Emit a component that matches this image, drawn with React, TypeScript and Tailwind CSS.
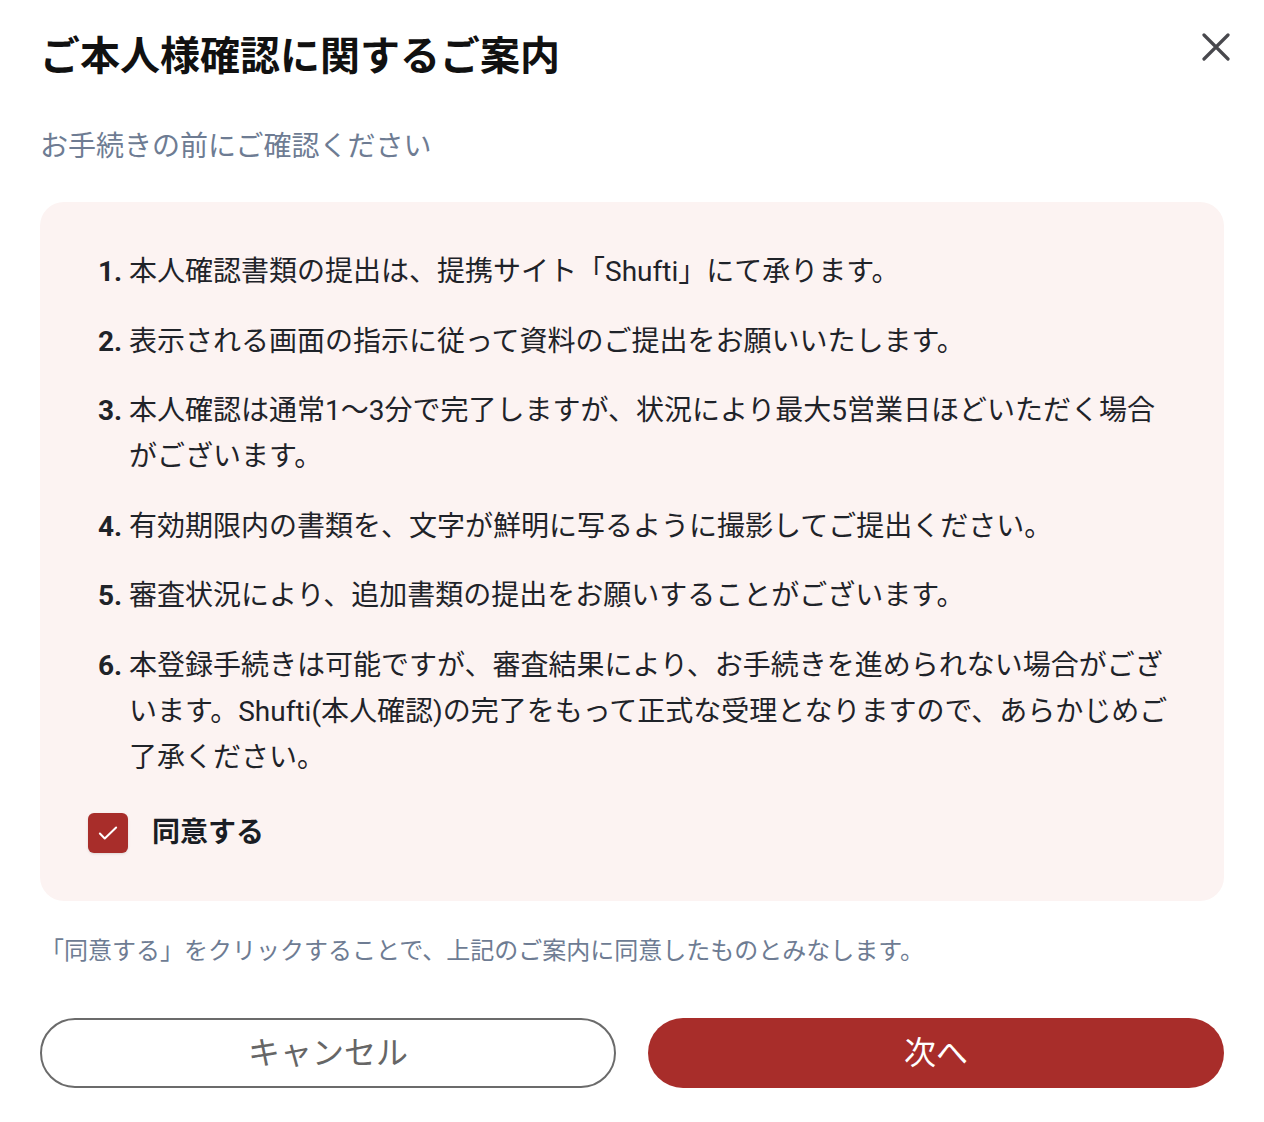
const items = [
    '本人確認書類の提出は、提携サイト「Shufti」にて承ります。',
    '表示される画面の指示に従って資料のご提出をお願いいたします。',
    '本人確認は通常1〜3分で完了しますが、状況により最大5営業日ほどいただく場合がございます。',
    '有効期限内の書類を、文字が鮮明に写るように撮影してご提出ください。',
    '審査状況により、追加書類の提出をお願いすることがございます。',
    '本登録手続きは可能ですが、審査結果により、お手続きを進められない場合がございます。Shufti(本人確認)の完了をもって正式な受理となりますので、あらかじめご了承ください。',
];

export default function App() {
    return (
        <div
            className="min-h-screen bg-white px-10 pt-[29px]"
            style={{ fontFamily: 'Roboto, "Noto Sans CJK JP", sans-serif' }}
        >
            {/* Header */}
            <div className="flex items-start justify-between">
                <h1 className="text-[40px] leading-[56px] font-bold text-[#111]">
                    ご本人様確認に関するご案内
                </h1>
                <button className="mt-[4px] mr-[-6px] text-[#48484d]">
                    <svg width="28" height="28" viewBox="0 0 28 28" fill="none" stroke="currentColor" strokeWidth="3.2" strokeLinecap="round">
                        <path d="M2 2l24 24M26 2L2 26" />
                    </svg>
                </button>
            </div>

            <p className="mt-[42px] text-[28px] leading-[40px] text-[#6e7c93]">
                お手続きの前にご確認ください
            </p>

            {/* Notice box */}
            <div className="mt-[35px] rounded-3xl bg-[#fcf3f2] pl-12 pr-[52px] pt-[47px] pb-[48px]">
                <ol className="flex flex-col gap-[23.5px] pl-[10px]">
                    {items.map((text, i) => (
                        <li key={i} className="flex text-[28px] leading-[46px] text-[#1f2329]">
                            <span className="w-[31px] shrink-0 font-bold">{i + 1}.</span>
                            <span>{text}</span>
                        </li>
                    ))}
                </ol>

                <label className="mt-[32.5px] flex items-center gap-6">
                    <span className="flex h-10 w-10 items-center justify-center rounded-md bg-[#a82d2a] shadow-sm">
                        <svg width="26" height="26" viewBox="0 0 24 24" fill="none" stroke="white" strokeWidth="1.9" strokeLinecap="round" strokeLinejoin="round">
                            <path d="M4.5 12.5l4.5 4.5L19.5 7" />
                        </svg>
                    </span>
                    <span className="text-[28px] leading-[40px] font-bold text-[#1a1d24]">同意する</span>
                </label>
            </div>

            <p className="mt-[34px] text-[24px] leading-[32px] text-[#6e7c93]">
                「同意する」をクリックすることで、上記のご案内に同意したものとみなします。
            </p>

            {/* Actions */}
            <div className="mt-[51px] grid grid-cols-2 gap-8">
                <button className="h-[70px] rounded-full border-2 border-[#6b6b6b] bg-white text-[32px] text-[#666]">
                    キャンセル
                </button>
                <button className="h-[70px] rounded-full bg-[#a82d2a] text-[32px] text-white">
                    次へ
                </button>
            </div>
        </div>
    );
}
